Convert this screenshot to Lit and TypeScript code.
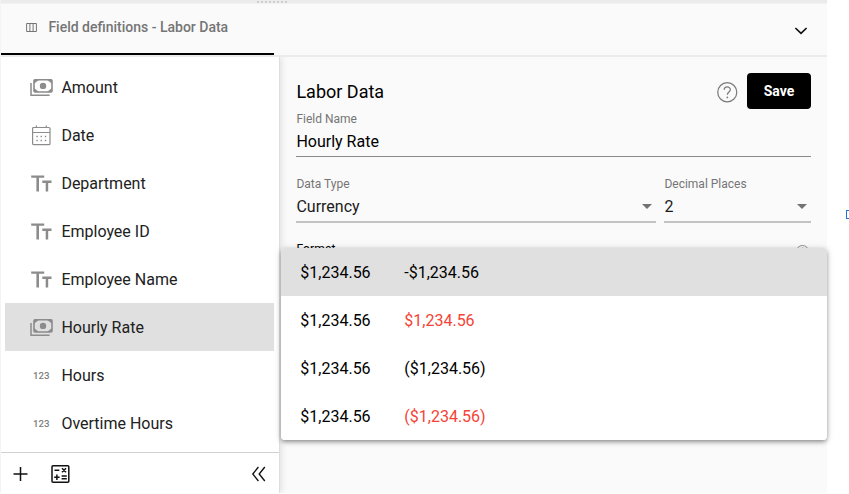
import { LitElement, html, svg, css, nothing } from "lit";
import { customElement, property, state } from "lit/decorators.js";
import { classMap } from "lit/directives/class-map.js";

const icons: Record<string, unknown> = {
  money: svg`<path d="M1 6V18.2H19.6" fill="none" stroke="currentColor" stroke-width="1.5"/>
    <rect x="4" y="2.8" width="18" height="12.2" rx="1" fill="none" stroke="currentColor" stroke-width="1.6"/>
    <path d="M4 2.8h5L4 6.8ZM22 2.8v4L17 2.8ZM4 15v-4l5 4ZM22 15h-5l5-4Z" fill="currentColor"/>
    <circle cx="13" cy="8.9" r="3.2" fill="currentColor"/>`,
  date: svg`<rect x="2.6" y="2.5" width="17.4" height="17.2" rx="1" fill="none" stroke="currentColor" stroke-width="1.2"/>
    <path d="M2.6 7.5H20M6.4 .4V3M16.3 .4V3" fill="none" stroke="currentColor" stroke-width="1.2"/>
    <path d="M6.4 11.5h1.4M10.6 11.5h1.4M14.8 11.5h1.4M6.4 15.5h1.4M10.6 15.5h1.4M14.8 15.5h1.4" stroke="currentColor" stroke-width="1.4"/>`,
  text: svg`<path d="M1.2 2.4h13v2.3H9v13.9H6.4V4.7H1.2ZM12.3 7.6h9.2v2.3h-3.3v8.7h-2.5V9.9h-3.4Z" fill="currentColor"/>`,
  number: svg`<text class="digits" x="3" y="13.5" textLength="16.5" lengthAdjust="spacingAndGlyphs">123</text>`,
};

const help = (size: number) => html`<svg width=${size} height=${size} viewBox="0 0 20 20">
  <circle cx="10" cy="10" r="9.3" fill="none" stroke="currentColor" stroke-width="1.2"/>
  <path d="M7 7.6C7 3.9 13 3.9 13 7.5c0 2.2-2.9 2.3-2.9 4.9" fill="none" stroke="currentColor" stroke-width="1.2"/>
  <circle cx="10.1" cy="15" r=".85" fill="currentColor"/></svg>`;

@customElement("field-select")
class FieldSelect extends LitElement {
  @property() label = "";
  @property() value = "";
  static styles = css`
    :host { display: block; height: 47px; border-bottom: 2px solid #c2c2c2; box-sizing: border-box; }
    .label { font-size: 12px; line-height: 16px; color: #757575; }
    .row { display: flex; align-items: center; justify-content: space-between; height: 29px; font-size: 16px; padding-right: 4px; color: #1c1c1c; }
    .arrow { border: 5px solid transparent; border-top-color: #737373; border-bottom: 0; }
  `;
  render() {
    return html`<div class="label">${this.label}</div>
      <div class="row"><span>${this.value}</span><span class="arrow"></span></div>`;
  }
}

@customElement("app-root")
class AppRoot extends LitElement {
  @state() selected = "Hourly Rate";
  fields = [
    ["money", "Amount"], ["date", "Date"], ["text", "Department"], ["text", "Employee ID"],
    ["text", "Employee Name"], ["money", "Hourly Rate"], ["number", "Hours"], ["number", "Overtime Hours"],
  ];
  formats: [string, boolean][] = [
    ["-$1,234.56", false], ["$1,234.56", true], ["($1,234.56)", false], ["($1,234.56)", true],
  ];
  static styles = css`
    :host { display: block; position: relative; width: 849px; height: 494px; overflow: hidden; background: #fff; font-family: Roboto, sans-serif; color: #000; }
    * { box-sizing: border-box; }
    svg { display: block; flex: none; }
    .panel { width: 827px; height: 493px; background: #fafafa; display: flex; flex-direction: column; border-left: 1px solid #f4f4f4; }
    .resize { height: 4px; flex: none; background: #ebebeb; border-bottom: 1px solid #f2f2f2; display: flex; padding: 1px 0 0 256px; gap: 2px; }
    .resize i { width: 2px; height: 2px; background: #cecece; }
    .header { height: 53px; flex: none; display: flex; justify-content: space-between; border-bottom: 2px solid #ebebeb; }
    .tab { width: 273.4px; height: 51.4px; border-bottom: 2px solid #000; display: flex; align-items: center; gap: 11.4px; padding: 0 0 3.4px 25px; color: #757575; font-size: 14px; font-weight: 500; }
    .chevron { align-self: center; margin: 1px 19px 0 0; }
    .body { display: flex; flex: 1; min-height: 0; }
    .sidebar { width: 279px; flex: none; background: #fff; border-right: 1px solid #dedede; box-shadow: 1px 0 7px rgba(0,0,0,.12); clip-path: inset(0 -10px 0 0); display: flex; flex-direction: column; }
    .list { flex: 1; padding: 6.4px 4.6px 0 4.4px; }
    .item { height: 48px; display: flex; align-items: center; gap: 8.4px; padding-left: 24.6px; font-size: 16px; color: #212121; }
    .item svg { color: #8c8c8c; margin-top: 1px; }
    .item.selected { background: #e0e0e0; }
    .digits { font: 500 9px Roboto, sans-serif; fill: #808080; }
    .footer { height: 41px; flex: none; border-top: 1px solid #d0d0d0; display: flex; align-items: center; padding: 2px 13px 0 12px; }
    .calc { margin-left: 23px; fill: none; stroke: #111; stroke-width: 1.5; }
    .collapse { margin-left: auto; }
    .main { flex: 1; padding: 0 16px 0 16.4px; }
    .title { display: flex; align-items: center; height: 36px; margin-top: 16.4px; font-size: 18px; }
    .title svg { margin: 2px 0 0 auto; color: #7a7a7a; }
    .save { width: 64px; height: 36px; margin-left: 9.5px; border-radius: 4px; background: #000; color: #fff; display: flex; align-items: center; justify-content: center; font-size: 14px; font-weight: 700; }
    .label { font-size: 12px; line-height: 16px; color: #757575; margin-top: 1.2px; }
    .input { height: 30.4px; line-height: 29px; font-size: 16px; border-bottom: 1px solid #8a8a8a; }
    .selects { display: grid; grid-template-columns: 360px 1fr; gap: 8px; margin-top: 19px; }
    .format { display: flex; justify-content: space-between; margin-top: 19.5px; font-size: 12px; line-height: 14px; letter-spacing: .15px; }
    .format svg { margin: 2.5px 2px 0 0; color: #757575; }
    .menu { position: absolute; left: 280.5px; top: 248px; width: 546.5px; height: 192px; border-radius: 4px; overflow: hidden; background: #fff; }
    .shadow { position: absolute; left: 280.5px; top: 248px; width: 546.5px; height: 192px; border-radius: 4px; box-shadow: 0 2px 4px -1px rgba(0,0,0,.3), 0 2px 5px rgba(0,0,0,.18), 0 1px 8px rgba(0,0,0,.12); }
    .option { height: 48px; display: grid; grid-template-columns: 104px 1fr; align-items: center; padding-left: 19.8px; font-size: 16px; }
    .option.active { background: #e0e0e0; }
    .red { color: #f44336; }
    .edge { position: absolute; left: 846px; top: 210px; width: 9px; height: 9px; border: 1px solid #1a73e8; }
  `;
  render() {
    return html`<div class="panel">
      <div class="resize">${Array.from({ length: 8 }, () => html`<i></i>`)}</div>
      <div class="header">
        <div class="tab">
          <svg width="11" height="9" viewBox="0 0 11 9"><path d="M.6.5h9.8v8H.6ZM3.9.5v8M7.1.5v8" fill="none" stroke="currentColor"/></svg>
          <span>Field definitions - Labor Data</span>
        </div>
        <svg class="chevron" width="14" height="9" viewBox="0 0 14 9"><path d="m1.4 2 5.6 5.4L12.6 2" fill="none" stroke="#111" stroke-width="1.7"/></svg>
      </div>
      <div class="body">
        <div class="sidebar">
          <div class="list">${this.fields.map(([icon, name]) => html`
            <div class=${classMap({ item: true, selected: name === this.selected })} @click=${() => (this.selected = name)}>
              <svg width="23" height="21" viewBox="0 0 23 21">${icons[icon]}</svg><span>${name}</span>
            </div>`)}</div>
          <div class="footer">
            <svg width="15" height="14" viewBox="0 0 15 14"><path d="M7.5 0v14M.5 7h14" stroke="#111" stroke-width="1.5"/></svg>
            <svg class="calc" width="20" height="20" viewBox="0 0 20 20"><rect x="1" y="1.7" width="16.8" height="16.6" rx="1"/><path d="M3.5 6.3h4.8M11 4.2l4 4M15 4.2l-4 4M3.2 13.3h5.4M5.9 10.6v5.4M10.6 12h5.2M10.6 14.8h5.2"/></svg>
            <svg class="collapse" width="15" height="16" viewBox="0 0 15 16"><path d="M7.4 1 1.8 8l5.6 7M13.8 1 8.2 8l5.6 7" fill="none" stroke="#111" stroke-width="1.4"/></svg>
          </div>
        </div>
        <div class="main">
          <div class="title"><span>Labor Data</span>${help(20.5)}<div class="save">Save</div></div>
          <div class="label">Field Name</div>
          <div class="input">Hourly Rate</div>
          <div class="selects">
            <field-select label="Data Type" value="Currency"></field-select>
            <field-select label="Decimal Places" value="2"></field-select>
          </div>
          <div class="format"><span>Format</span>${help(13)}</div>
        </div>
      </div>
    </div>
    <div class="shadow"></div>
    <div class="menu">${this.formats.map(([value, red], i) => html`
      <div class=${classMap({ option: true, active: i === 0 })}><span>$1,234.56</span><span class=${red ? "red" : nothing}>${value}</span></div>`)}</div>
    <div class="edge"></div>`;
  }
}
